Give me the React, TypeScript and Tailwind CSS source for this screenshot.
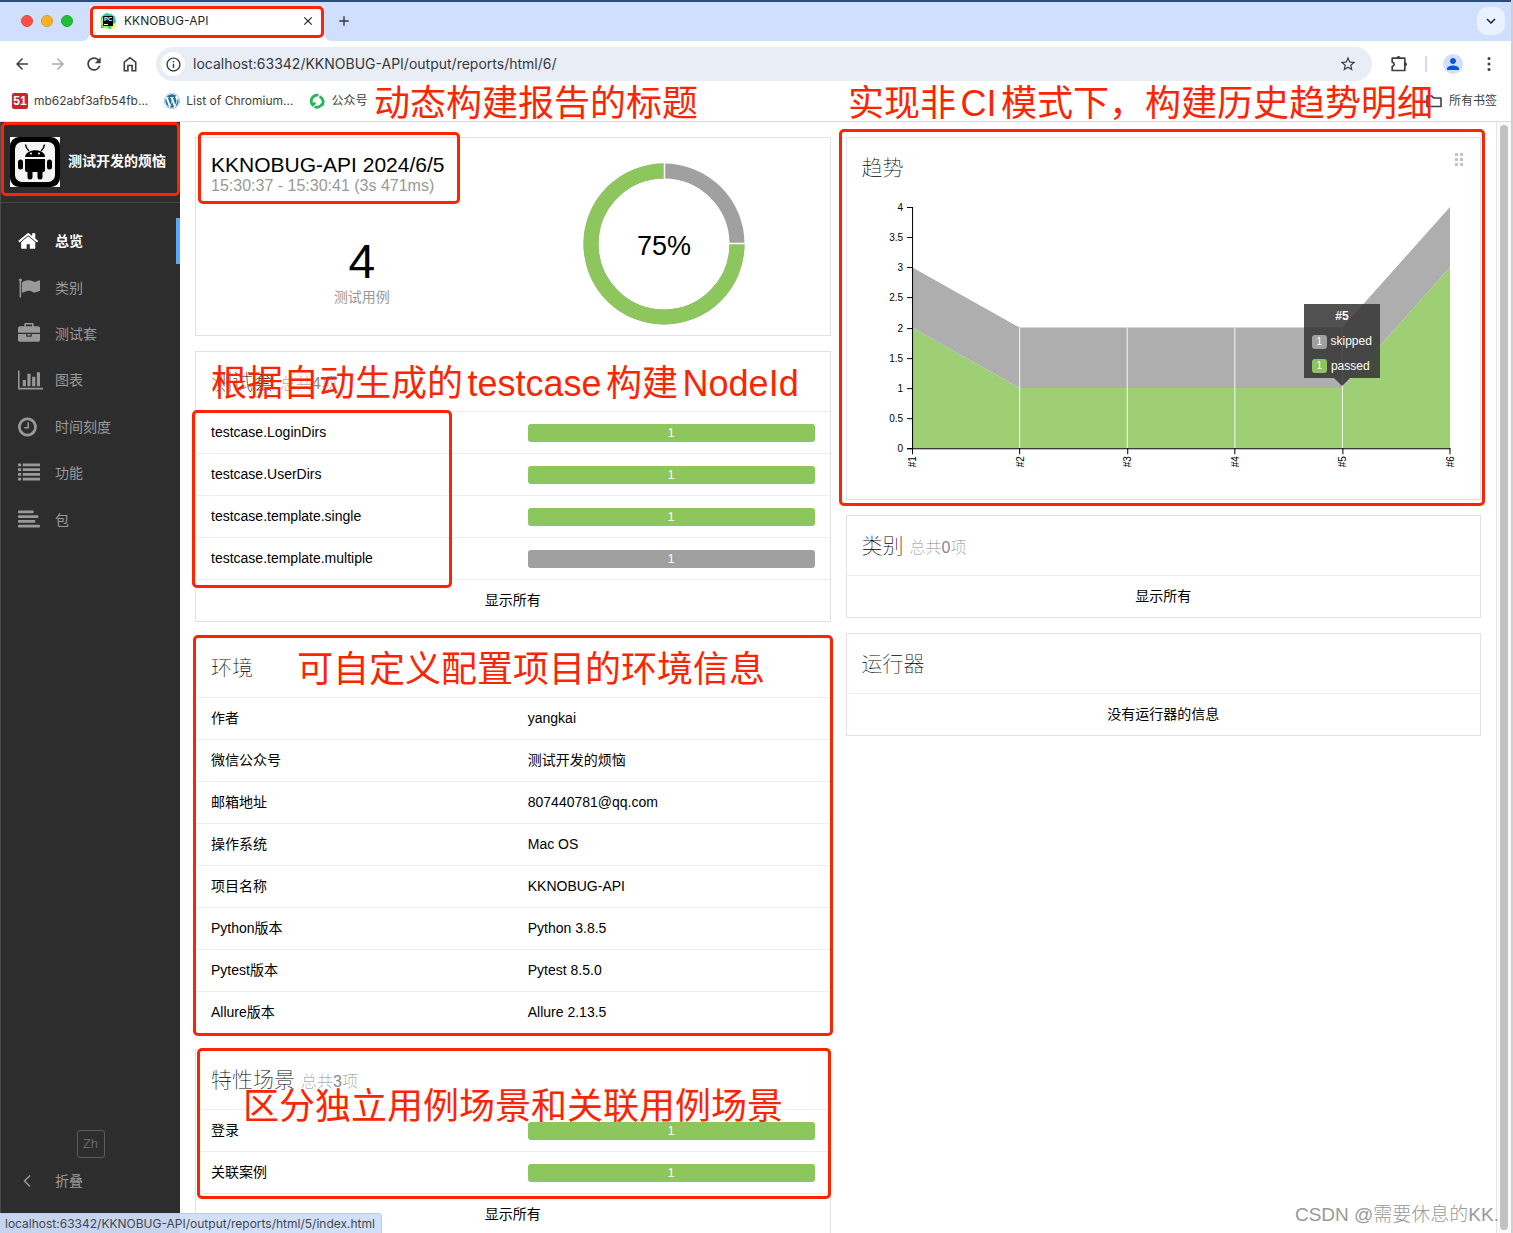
import type { ReactNode } from 'react';
import {
  MdArrowBack,
  MdArrowForward,
  MdClose,
  MdAdd,
  MdInfoOutline,
  MdKeyboardArrowDown,
  MdPerson,
  MdRefresh,
  MdStarBorder,
} from 'react-icons/md';
import { FaWordpress } from 'react-icons/fa';

type Status = 'passed' | 'skipped';

const navItems = [
  {
    label: '总览',
    left: 64,
    width: 1664,
    path: 'M1472 992v480q0 26-19 45t-45 19h-384v-384h-256v384h-384q-26 0-45-19t-19-45v-480q0-1 .5-3t.5-3l575-474 575 474q1 2 1 6zm223-69l-62 74q-8 9-21 11h-3q-13 0-21-7l-692-577-692 577q-12 8-24 7-13-2-21-11l-62-74q-8-10-7-23.5t11-21.5l719-599q32-26 76-26t76 26l244 204v-195q0-14 9-23t23-9h192q14 0 23 9t9 23v408l219 182q10 8 11 21.5t-7 23.5z',
  },
  {
    label: '类别',
    left: 0,
    width: 1792,
    path: 'M320 256q0 72-64 110v1266q0 13-9.5 22.5t-22.5 9.5h-64q-13 0-22.5-9.5t-9.5-22.5v-1266q-64-38-64-110 0-53 37.5-90.5t90.5-37.5 90.5 37.5 37.5 90.5zm1472 64v763q0 25-12.5 38.5t-39.5 27.5q-215 116-369 116-61 0-123.5-22t-108.5-48-115.5-48-142.5-22q-192 0-464 146-17 9-33 9-26 0-45-19t-19-45v-742q0-32 31-55 21-14 79-43 236-120 421-120 107 0 200 29t219 88q38 19 88 19 54 0 117.5-21t110-47 88-47 54.5-21q26 0 45 19t19 45z',
  },
  {
    label: '测试套',
    left: 0,
    width: 1792,
    path: 'M640 256h512v-128h-512v128zm1152 640v480q0 66-47 113t-113 47h-1472q-66 0-113-47t-47-113v-480h672v160q0 26 19 45t45 19h320q26 0 45-19t19-45v-160h672zm-768 0v128h-256v-128h256zm768-480v384h-1792v-384q0-66 47-113t113-47h352v-160q0-40 28-68t68-28h576q40 0 68 28t28 68v160h352q66 0 113 47t47 113z',
  },
  {
    label: '图表',
    left: 0,
    width: 2048,
    path: 'M640 896v512h-256v-512h256zm384-512v1024h-256v-1024h256zm1024 1152v128h-2048v-1536h128v1408h1920zm-640-896v768h-256v-768h256zm384-384v1152h-256v-1152h256z',
  },
  {
    label: '时间刻度',
    left: 128,
    width: 1536,
    path: 'M1024 544v448q0 14-9 23t-23 9h-320q-14 0-23-9t-9-23v-64q0-14 9-23t23-9h224v-352q0-14 9-23t23-9h64q14 0 23 9t9 23zm416 352q0-148-73-273t-198-198-273-73-273 73-198 198-73 273 73 273 198 198 273 73 273-73 198-198 73-273zm224 0q0 209-103 385.5t-279.5 279.5-385.5 103-385.5-103-279.5-279.5-103-385.5 103-385.5 279.5-279.5 385.5-103 385.5 103 279.5 279.5 103 385.5z',
  },
  {
    label: '功能',
    left: 0,
    width: 1792,
    path: 'M0 128h256v224h-256zM384 128h1408v224h-1408zM0 512h256v224h-256zM384 512h1408v224h-1408zM0 896h256v224h-256zM384 896h1408v224h-1408zM0 1280h256v224h-256zM384 1280h1408v224h-1408z',
  },
  {
    label: '包',
    left: 0,
    width: 1792,
    path: 'M64 128h1152q64 0 64 64v96q0 64-64 64h-1152q-64 0-64-64v-96q0-64 64-64zM64 512h1536q64 0 64 64v96q0 64-64 64h-1536q-64 0-64-64v-96q0-64 64-64zM64 896h1280q64 0 64 64v96q0 64-64 64h-1280q-64 0-64-64v-96q0-64 64-64zM64 1280h1664q64 0 64 64v96q0 64-64 64h-1664q-64 0-64-64v-96q0-64 64-64z',
  },
];

const suites: { name: string; status: Status }[] = [
  { name: 'testcase.LoginDirs', status: 'passed' },
  { name: 'testcase.UserDirs', status: 'passed' },
  { name: 'testcase.template.single', status: 'passed' },
  { name: 'testcase.template.multiple', status: 'skipped' },
];

const features: { name: string; status: Status }[] = [
  { name: '登录', status: 'passed' },
  { name: '关联案例', status: 'passed' },
];

const environment = [
  ['作者', 'yangkai'],
  ['微信公众号', '测试开发的烦恼'],
  ['邮箱地址', '807440781@qq.com'],
  ['操作系统', 'Mac OS'],
  ['项目名称', 'KKNOBUG-API'],
  ['Python版本', 'Python 3.8.5'],
  ['Pytest版本', 'Pytest 8.5.0'],
  ['Allure版本', 'Allure 2.13.5'],
];

const history = [
  { passed: 2, skipped: 1 },
  { passed: 1, skipped: 1 },
  { passed: 1, skipped: 1 },
  { passed: 1, skipped: 1 },
  { passed: 1, skipped: 1 },
  { passed: 3, skipped: 1 },
];

/* ---------- red markup ---------- */

function Mark({ className }: { className: string }) {
  return (
    <div
      className={`pointer-events-none absolute z-10 rounded-[5px] border-3 border-[#fb2503] ${className}`}
    />
  );
}

function Note({ className, children }: { className: string; children: ReactNode }) {
  return (
    <p
      className={`pointer-events-none absolute z-20 whitespace-nowrap font-['Liberation_Sans','Noto_Sans_CJK_SC',sans-serif] text-[36px] leading-[48px] text-[#fb2503] [text-autospace:normal] ${className}`}
    >
      {children}
    </p>
  );
}

/* ---------- browser ---------- */

function PyCharmIcon() {
  return (
    <svg className="size-4" viewBox="0 0 16 16" aria-hidden="true">
      <path d="M1 4l5-4 5 1 4 3 1 5-3 3-2 4-5-1-5 0z" fill="#21d789" />
      <path d="M11 1l4 3-1 5 2 2-3 2-2-3z" fill="#07c3f2" />
      <path d="M0 9l3-5 3 8 4 4-6-1z" fill="#b8f03c" />
      <path d="M12 11l4-1-1 5-4 1z" fill="#fcf84a" />
      <rect x="3" y="3" width="10" height="10" fill="#000" />
      <text x="4" y="8" fontSize="6" fontWeight="700" fill="#fff" fontFamily="Liberation Sans, sans-serif">
        PC
      </text>
      <rect x="4" y="11" width="4" height="1" fill="#fff" />
    </svg>
  );
}

function TabStrip() {
  return (
    <div className="flex h-[41px] items-start border-t-2 border-[#2b4c78] bg-[#cfdffd] pl-[21px]">
      <div className="flex h-[38px] items-center gap-2">
        <span className="size-3 rounded-full border border-[#e0443e] bg-[#fe5048]" />
        <span className="size-3 rounded-full border border-[#df9b25] bg-[#fcb024]" />
        <span className="size-3 rounded-full border border-[#1aab29] bg-[#1fc033]" />
      </div>
      <div className="relative ml-[17px] mt-1 h-[35px] w-[234px] bg-white">
        <svg className="absolute bottom-0 -left-2 size-2" viewBox="0 0 8 8" aria-hidden="true">
          <path d="M8 0v8H0a8 8 0 0 0 8-8z" fill="#fff" />
        </svg>
        <svg className="absolute bottom-0 -right-2 size-2" viewBox="0 0 8 8" aria-hidden="true">
          <path d="M0 0v8h8a8 8 0 0 1-8-8z" fill="#fff" />
        </svg>
        <div className="flex h-8 items-center rounded-[5px] border-3 border-[#fb2503] pb-0.5 pl-[7px] pr-[6px]">
          <PyCharmIcon />
          <span className="ml-2 flex-1 text-xs leading-4">KKNOBUG-API</span>
          <button aria-label="Close tab">
            <MdClose className="size-[14px] stroke-current" />
          </button>
        </div>
      </div>
      <button aria-label="New tab" className="ml-3 mt-[11px] text-[#333]">
        <MdAdd className="size-4" />
      </button>
      <button
        aria-label="Search tabs"
        className="ml-auto mr-[6px] mt-[5px] flex size-7 items-center justify-center rounded-[10px] bg-[#e9f0fe]"
      >
        <MdKeyboardArrowDown className="size-[18px]" />
      </button>
    </div>
  );
}

function Toolbar() {
  return (
    <div className="flex h-[46px] items-center bg-white pl-3 pr-3 text-[#3c3f43]">
      <div className="flex items-center gap-4">
        <button aria-label="Back">
          <MdArrowBack className="size-5 p-px" />
        </button>
        <button aria-label="Forward" className="text-[#a9abae]">
          <MdArrowForward className="size-5 p-px" />
        </button>
        <button aria-label="Reload">
          <MdRefresh className="size-5" />
        </button>
        <button aria-label="Home">
          <svg className="size-5" viewBox="0 0 20 20" fill="none" stroke="currentColor" strokeWidth="1.6" aria-hidden="true">
            <path d="M4.3 8.2 10 3.7l5.700 4.500v8.500h-3.600v-5.200H7.900v5.200H4.300z" />
          </svg>
        </button>
      </div>
      <div className="ml-4 flex h-[34px] flex-1 items-center rounded-full bg-[#e9edf6] pl-[5px] pr-[15px]">
        <span className="flex size-6 items-center justify-center rounded-full bg-white">
          <MdInfoOutline className="size-[17px]" />
        </span>
        <input
          aria-label="Address"
          className="ml-2 min-w-0 flex-1 bg-transparent text-sm text-[#35383c] outline-none"
          defaultValue="localhost:63342/KKNOBUG-API/output/reports/html/6/"
        />
        <button aria-label="Bookmark this page">
          <MdStarBorder className="size-[18px]" />
        </button>
      </div>
      <button aria-label="Extensions" className="ml-[17px]">
        <svg className="size-5" viewBox="0 0 20 20" fill="none" stroke="currentColor" strokeWidth="1.700" aria-hidden="true">
          <path d="M3.200 4.200h12.600v12.300H3.200v-4c2.600-.5 2.600-3.800 0-4.300z" strokeLinejoin="round" />
          <path d="M7.500 4a2 2 0 0 1 4 0z" fill="currentColor" stroke="none" />
          <path d="M16 8.300a2 2 0 0 1 0 4z" fill="currentColor" stroke="none" />
        </svg>
      </button>
      <span className="ml-4 h-4 w-0.5 bg-[#cddffc]" />
      <button
        aria-label="Profile"
        className="ml-4 flex size-5 items-center justify-center rounded-full bg-[#cfdffd] text-[#0b57d0]"
      >
        <MdPerson className="size-[18px]" />
      </button>
      <button aria-label="Menu" className="ml-4">
        <svg className="size-5" viewBox="0 0 20 20" fill="currentColor" aria-hidden="true">
          <circle cx="10" cy="4.500" r="1.500" />
          <circle cx="10" cy="10" r="1.500" />
          <circle cx="10" cy="15.500" r="1.500" />
        </svg>
      </button>
    </div>
  );
}

function Bookmarks() {
  return (
    <nav className="flex h-[35px] items-center border-b border-[#dcdddf] bg-white pb-[7px] pl-3 pr-[14px] text-xs text-[#3c3f43]">
      <a href="#" className="flex items-center gap-[6px]">
        <span className="flex size-4 items-center justify-center rounded-xs bg-[#c9252d] font-['Liberation_Sans',sans-serif] text-xs font-bold text-white">
          51
        </span>
        mb62abf3afb54fb...
      </a>
      <a href="#" className="ml-4 flex items-center gap-[6px]">
        <FaWordpress className="size-4 text-[#21759b]" />
        List of Chromium...
      </a>
      <a href="#" className="ml-4 flex items-center gap-[6px]">
        <svg className="size-4" viewBox="0 0 16 16" fill="none" stroke="#1fb955" strokeWidth="2.800" aria-hidden="true">
          <path d="M9.500 2.200A6 6 0 0 0 3.800 12l2.400-2.200" />
          <path d="M10.500 3.500A6 6 0 0 1 13 12.500" />
          <path d="M13.500 10.500A6 6 0 0 1 5.500 13.700" />
        </svg>
        公众号
      </a>
      <a href="#" className="ml-auto flex items-center gap-[6px]">
        <svg className="h-4 w-[18px]" viewBox="0 0 18 16" fill="none" stroke="currentColor" strokeWidth="1.600" aria-hidden="true">
          <path d="M2 3h5l1.500 2H16v8.500H2z" strokeLinejoin="round" />
        </svg>
        所有书签
      </a>
    </nav>
  );
}

/* ---------- report ---------- */

function AndroidLogo() {
  return (
    <svg className="size-[50px]" viewBox="0 0 50 50" aria-hidden="true">
      <rect width="50" height="50" fill="#fff" />
      <rect width="50" height="50" rx="9" fill="#000" />
      <rect x="5" y="5" width="40" height="40" rx="7" fill="#f4f4f4" />
      <path d="M15.500 7.500q.5 4 3.500 6.500M34.500 7.500q-.5 4-3.500 6.500" stroke="#000" strokeWidth="1.500" fill="none" />
      <path d="M15 20c1-9 20-9 20 0z" />
      <circle cx="21" cy="16.500" r="1" fill="#fff" />
      <circle cx="29" cy="16.500" r="1" fill="#fff" />
      <path d="M15 22h20V33q0 2-2 2h-.500v5a2.500 2.500 0 0 1-5 0v-5h-5v5a2.500 2.500 0 0 1-5 0v-5H17q-2 0-2-2z" />
      <rect x="8" y="22.500" width="5" height="10" rx="2.500" />
      <rect x="37" y="22.500" width="5" height="10" rx="2.500" />
    </svg>
  );
}

function Sidebar() {
  return (
    <aside className="flex w-[180px] shrink-0 flex-col border-l border-[#4b4b4b] bg-[#2d2d2d] text-sm text-[#999]">
      <div className="relative flex h-[81px] items-center border-b border-[#454545] pl-[9px]">
        <AndroidLogo />
        <span className="ml-2 pb-0.5 font-bold text-white">测试开发的烦恼</span>
        <Mark className="left-0 right-0 top-0 bottom-[6px]" />
      </div>
      <nav className="mt-[15px] grid h-[325px] auto-rows-fr">
        {navItems.map((item, i) => (
          <a
            key={item.label}
            href="#"
            className={
              i === 0
                ? 'flex items-center border-r-4 border-[#57a8f8] pl-[17px] font-bold text-white'
                : 'flex items-center pl-[17px]'
            }
          >
            <span className="w-[37px]">
              <svg
                className="h-[22px] w-auto"
                viewBox={`${item.left} 0 ${item.width} 1792`}
                fill="currentColor"
                aria-hidden="true"
              >
                <path d={item.path} />
              </svg>
            </span>
            {item.label}
          </a>
        ))}
      </nav>
      <button className="mt-auto size-7 self-center rounded-[3px] border border-[#5c5c5c] text-[13px] text-[#666]">
        Zh
      </button>
      <button className="mb-[29px] flex h-[46px] items-center pl-[22px]">
        <svg className="mr-6 h-3 w-2" viewBox="0 0 8 12" fill="none" stroke="currentColor" strokeWidth="1.500" aria-hidden="true">
          <path d="M7 .500 1.500 6 7 11.500" />
        </svg>
        折叠
      </button>
    </aside>
  );
}

function Card({ children }: { children: ReactNode }) {
  return <section className="relative border border-[#e0e1e2] bg-white">{children}</section>;
}

function CardHeader({ title, count }: { title: string; count?: number }) {
  return (
    <header className="flex h-[59px] items-center px-[15px]">
      <h2 className="text-[21px] font-thin text-black">
        {title}
        {count !== undefined && <small className="ml-1.5 text-base text-[#888]">总共{count}项</small>}
      </h2>
    </header>
  );
}

function StatusRows({ items }: { items: { name: string; status: Status }[] }) {
  return (
    <>
      {items.map((item) => (
        <a key={item.name} href="#" className="grid h-[42px] grid-cols-2 items-center border-t border-[#eceeef]">
          <span className="px-[15px] pb-0.5">{item.name}</span>
          <span className="px-[15px] pt-px">
            <span
              className={
                item.status === 'passed'
                  ? 'block rounded-[3px] bg-[#8dc65c] text-center text-xs leading-[18px] text-white'
                  : 'block rounded-[3px] bg-[#a0a0a0] text-center text-xs leading-[18px] text-white'
              }
            >
              1
            </span>
          </span>
        </a>
      ))}
    </>
  );
}

function ShowAll() {
  return (
    <a href="#" className="flex h-[42px] items-center justify-center border-t border-[#eceeef] pb-0.5">
      显示所有
    </a>
  );
}

function Donut() {
  const length = 2 * Math.PI * 73;
  return (
    <svg className="size-[162px]" viewBox="0 0 162 162" role="img" aria-label="75%">
      <g fill="none" strokeWidth="15" transform="rotate(-90 81 81)">
        <circle cx="81" cy="81" r="73" stroke="#a0a0a0" />
        <circle
          cx="81"
          cy="81"
          r="73"
          stroke="#8dc65c"
          strokeDasharray={`${length * 0.75} ${length * 0.25}`}
          strokeDashoffset={-length * 0.25}
        />
      </g>
      <path d="M81.500 0v17M145 80.500h17" stroke="#fff" strokeWidth="1.500" />
      <text x="81" y="92" textAnchor="middle" fontSize="27">
        75%
      </text>
    </svg>
  );
}

function SummaryCard() {
  return (
    <Card>
      <div className="grid h-[197px] grid-cols-2 px-[15px]">
        <div className="pt-4">
          <h1 className="text-[21px] leading-[22px]">KKNOBUG-API 2024/6/5</h1>
          <p className="text-base leading-5 text-[#999]">15:30:37 - 15:30:41 (3s 471ms)</p>
          <p className="mt-[42px] text-center text-5xl leading-[48px]">4</p>
          <p className="mt-px text-center leading-5 text-[#999]">测试用例</p>
        </div>
        <div className="flex justify-center pt-[25px]">
          <Donut />
        </div>
      </div>
      <Mark className="-top-[6px] left-[2px] h-[72px] w-[262px]" />
    </Card>
  );
}

function TrendChart() {
  const x = (i: number) => 65 + i * 107.5;
  const y = (v: number) => 251 - v * 60.25;
  const bottom = history.map((h, i) => `${x(i)},${y(h.passed)}`);
  const top = history.map((h, i) => `${x(i)},${y(h.passed + h.skipped)}`);
  const ticks = [0, 0.5, 1, 1.5, 2, 2.5, 3, 3.5, 4];

  return (
    <svg className="block w-full" viewBox="0 0 633 302" role="img" aria-label="趋势">
      <polygon points={`${x(0)},${y(0)} ${bottom.join(' ')} ${x(5)},${y(0)}`} fill="#9ecf74" />
      <polygon points={`${bottom.join(' ')} ${[...top].reverse().join(' ')}`} fill="#aeaeae" />
      {history.slice(1, 5).map((h, i) => (
        <line
          key={i}
          x1={x(i + 1)}
          x2={x(i + 1)}
          y1={y(h.passed + h.skipped)}
          y2={y(0)}
          stroke="#fff"
          strokeOpacity="0.9"
        />
      ))}
      <path d="M60 10.500h5.500V251.500H60M65.500 251.500H603" fill="none" stroke="#000" />
      <g fontSize="10" fontFamily="Liberation Sans, sans-serif">
        {ticks.map((t) => (
          <g key={t}>
            <line x1="60" x2="65" y1={Math.round(y(t)) + 0.5} y2={Math.round(y(t)) + 0.5} stroke="#000" />
            <text x="56" y={y(t) + 4} textAnchor="end">
              {t}
            </text>
          </g>
        ))}
        {history.map((_, i) => (
          <g key={i}>
            <line x1={Math.floor(x(i)) + 0.5} x2={Math.floor(x(i)) + 0.5} y1="251" y2="257" stroke="#000" />
            <text transform={`translate(${x(i) + 4} 259) rotate(-90)`} textAnchor="end">
              #{i + 1}
            </text>
          </g>
        ))}
      </g>
    </svg>
  );
}

function TrendTooltip() {
  return (
    <div
      role="tooltip"
      className="absolute left-[78.2%] top-[107px] w-[76px] -translate-x-1/2 bg-[#333]/85 px-2 text-xs leading-[25px] text-white"
    >
      <div className="h-[25px] text-center font-bold">#5</div>
      <div className="flex h-[25px] items-center gap-1">
        <span className="w-[15px] rounded-[3px] bg-[#a0a0a0] text-center text-[10px] leading-[14px]">1</span>
        skipped
      </div>
      <div className="flex h-6 items-center gap-1">
        <span className="w-[15px] rounded-[3px] bg-[#8dc65c] text-center text-[10px] leading-[14px]">1</span>
        passed
      </div>
      <svg className="absolute left-[30px] top-full h-2 w-4" viewBox="0 0 16 8" aria-hidden="true">
        <path d="M0 0h16L8 8z" fill="#333" fillOpacity="0.85" />
      </svg>
    </div>
  );
}

function TrendCard() {
  return (
    <Card>
      <div className="flex justify-between">
        <CardHeader title="趋势" />
        <button aria-label="移动" className="mr-[17px] mt-[15px] grid h-[13px] grid-cols-2 gap-[2px]">
          {[0, 1, 2, 3, 4, 5].map((dot) => (
            <span key={dot} className="size-[3px] bg-[#c4c4c4]" />
          ))}
        </button>
      </div>
      <div className="relative">
        <TrendChart />
        <TrendTooltip />
      </div>
      <Mark className="-left-[8px] -right-[5px] -top-[9px] -bottom-[7px]" />
    </Card>
  );
}

function EnvironmentCard() {
  return (
    <Card>
      <CardHeader title="环境" />
      <table className="w-full table-fixed border-separate border-spacing-0">
        <tbody>
          {environment.map(([name, value]) => (
            <tr key={name}>
              <th scope="row" className="h-[42px] border-t border-[#eceeef] px-[15px] pb-0.5 text-left font-normal">
                {name}
              </th>
              <td className="h-[42px] border-t border-[#eceeef] px-[15px] pb-0.5">{value}</td>
            </tr>
          ))}
        </tbody>
      </table>
      <Mark className="-inset-x-[3px] -top-[3px] -bottom-[3px]" />
      <Note className="left-[101px] top-2">可自定义配置项目的环境信息</Note>
    </Card>
  );
}

function Report() {
  return (
    <main className="grid min-w-0 flex-1 grid-cols-2 items-start gap-[15px] overflow-hidden bg-white p-[15px] text-sm text-black">
      <div className="flex flex-col gap-[15px]">
        <SummaryCard />
        <Card>
          <CardHeader title="测试套" count={4} />
          <StatusRows items={suites} />
          <ShowAll />
          <Mark className="-left-[4px] top-[58px] h-[178px] w-[260px]" />
          <Note className="left-[15px] top-2">根据自动生成的testcase构建NodeId</Note>
        </Card>
        <EnvironmentCard />
        <Card>
          <CardHeader title="特性场景" count={3} />
          <StatusRows items={features} />
          <ShowAll />
          <Mark className="-right-px -top-[2px] left-px h-[151px]" />
          <Note className="left-[47px] top-[33px]">区分独立用例场景和关联用例场景</Note>
        </Card>
      </div>
      <div className="flex flex-col gap-[15px]">
        <TrendCard />
        <Card>
          <CardHeader title="类别" count={0} />
          <ShowAll />
        </Card>
        <Card>
          <CardHeader title="运行器" />
          <p className="flex h-[42px] items-center justify-center border-t border-[#eceeef] pb-0.5">没有运行器的信息</p>
        </Card>
      </div>
    </main>
  );
}

export default function App() {
  return (
    <div className="relative flex h-screen flex-col overflow-hidden border-r-2 border-[#cfcfcf] bg-white font-['Inter','Noto_Sans_CJK_SC',sans-serif] text-[#1f1f1f]">
      <TabStrip />
      <Toolbar />
      <Bookmarks />
      <Note className="left-[374px] top-20">动态构建报告的标题</Note>
      <Note className="right-[78px] top-20">实现非CI模式下，构建历史趋势明细</Note>

      <div className="flex min-h-0 flex-1 font-['Liberation_Sans','Noto_Sans_CJK_SC',sans-serif]">
        <Sidebar />
        <Report />
        <div className="flex w-[15px] shrink-0 justify-center border-l border-[#e6e6e6] bg-[#fafafa] py-[3px]">
          <div className="w-2 rounded-full bg-[#c1c1c1]" />
        </div>
      </div>

      <div className="absolute bottom-0 left-0 z-30 h-5 rounded-tr-[4px] border-t border-r border-[#bccbe8] bg-[#cfddf9]/95 pl-[5px] pr-[6px] text-xs leading-[19px] text-[#44474c]">
        localhost:63342/KKNOBUG-API/output/reports/html/5/index.html
      </div>
      <p className="absolute bottom-1 right-3 z-30 font-['Liberation_Sans','Noto_Sans_CJK_SC',sans-serif] text-[19px] leading-7 font-light text-[#999]">
        CSDN @需要休息的KK.
      </p>
    </div>
  );
}
